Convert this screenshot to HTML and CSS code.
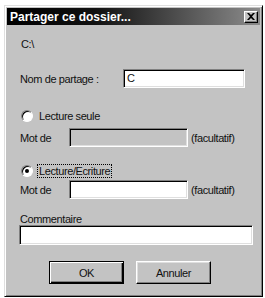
FILE: index.html
```html
<!DOCTYPE html>
<html>
<head>
<meta charset="utf-8">
<link rel="stylesheet" href="styles.css">
</head>
<body>
<div class="window">
  <div class="titlebar">
    <span class="title">Partager ce dossier...</span>
    <span class="close"><svg width="8" height="7" viewBox="0 0 8 7"><path d="M0 0h2l2 2 2-2h2L5 3.5 8 7H6L4 5 2 7H0l3-3.5z" fill="#000"/></svg></span>
  </div>
  <div class="content">
    <div class="row r-path">C:\</div>
    <div class="row r-name">
      <span class="label name-label">Nom de partage :</span>
      <span class="field name-field">C</span>
    </div>
    <div class="row r-radio1">
      <span class="radio"></span>
      <span class="rlabel">Lecture seule</span>
    </div>
    <div class="row r-pw1">
      <span class="label pw-label">Mot de</span>
      <span class="field pw-field disabled"></span>
      <span class="opt">(facultatif)</span>
    </div>
    <div class="row r-radio2">
      <span class="radio checked"></span>
      <span class="rlabel focus">Lecture/Ecriture</span>
    </div>
    <div class="row r-pw2">
      <span class="label pw-label">Mot de</span>
      <span class="field pw-field"></span>
      <span class="opt">(facultatif)</span>
    </div>
    <div class="row r-comment">Commentaire</div>
    <div class="row r-cfield"><span class="field comment-field"></span></div>
    <div class="row r-buttons">
      <span class="btn default">OK</span>
      <span class="btn">Annuler</span>
    </div>
  </div>
</div>
</body>
</html>
```
FILE: styles.css
```css
html, body {
  margin: 0;
  padding: 0;
  background: #ffffff;
}
body {
  font-family: "Liberation Sans", Arial, sans-serif;
  font-size: 11px;
  letter-spacing: -0.4px;
  color: #111;
}
.window {
  margin: 5px 0 0 4px;
  width: 259px;
  height: 292px;
  box-sizing: border-box;
  background: #c3c3c3;
  border: 1px solid;
  border-color: #dfdfdf #000 #000 #dfdfdf;
  box-shadow: inset 1px 1px 0 #fff, inset -1px -1px 0 #808080;
  padding: 2px;
}
.titlebar {
  height: 17px;
  display: flex;
  align-items: center;
  justify-content: space-between;
  background: linear-gradient(to right, #000 0%, #111 35%, #8c8c8c 100%);
  padding: 0 2px 0 3px;
}
.title {
  color: #fff;
  font-weight: bold;
  font-size: 12px;
  line-height: 14px;
  letter-spacing: 0;
}
.close {
  width: 14px;
  height: 12px;
  box-sizing: border-box;
  background: #c3c3c3;
  border: 1px solid;
  border-color: #fff #000 #000 #fff;
  box-shadow: inset -1px -1px 0 #808080;
  display: flex;
  align-items: center;
  justify-content: center;
}
.content {
  padding-left: 13px;
  padding-right: 7px;
}
.row {
  display: flex;
  align-items: center;
}
.r-path { margin-top: 12px; height: 13px; padding-left: 1px; }
.r-name { margin-top: 19px; height: 19px; }
.r-radio1 { margin-top: 21px; height: 14px; }
.r-pw1 { margin-top: 5px; height: 19px; }
.r-radio2 { margin-top: 17px; height: 14px; }
.r-pw2 { margin-top: 2px; height: 19px; }
.r-comment { margin-top: 13px; height: 13px; }
.r-cfield { height: 20px; }
.r-buttons { margin-top: 16px; height: 23px; padding-left: 29px; gap: 12px; }

.label { display: inline-block; }
.name-label { width: 103px; }
.pw-label { width: 49px; }

.field {
  display: block;
  box-sizing: border-box;
  background: #fff;
  border: 1px solid;
  border-color: #808080 #fff #fff #808080;
  box-shadow: inset 1px 1px 0 #000, inset -1px -1px 0 #dfdfdf;
  padding: 2px 0 0 3px;
  line-height: 13px;
}
.name-field { width: 122px; height: 19px; }
.pw-field { width: 119px; height: 19px; }
.pw-field.disabled { background: #c3c3c3; }
.comment-field { width: 234px; height: 20px; margin-left: -1px; }
.opt { margin-left: 3px; }

.radio {
  width: 12px;
  height: 12px;
  box-sizing: border-box;
  border-radius: 50%;
  background: #fff;
  border: 1px solid;
  border-color: #808080 #fff #fff #808080;
  box-shadow: inset 1px 1px 0 #000;
  margin-left: 1px;
  position: relative;
}
.radio.checked::after {
  content: "";
  position: absolute;
  left: 3px;
  top: 3px;
  width: 4px;
  height: 4px;
  border-radius: 50%;
  background: #000;
}
.rlabel {
  margin-left: 4px;
  padding: 0 1px;
  line-height: 12px;
  border: 1px solid transparent;
}
.rlabel.focus {
  border: 1px dotted #000;
}
.btn {
  width: 75px;
  height: 23px;
  box-sizing: border-box;
  display: flex;
  align-items: center;
  justify-content: center;
  background: #c3c3c3;
  border: 1px solid;
  border-color: #fff #000 #000 #fff;
  box-shadow: inset -1px -1px 0 #808080, inset 1px 1px 0 #dfdfdf;
}
.btn.default {
  border: 1px solid #000;
  box-shadow: inset 1px 1px 0 #fff, inset -1px -1px 0 #000, inset -2px -2px 0 #808080;
}
```
